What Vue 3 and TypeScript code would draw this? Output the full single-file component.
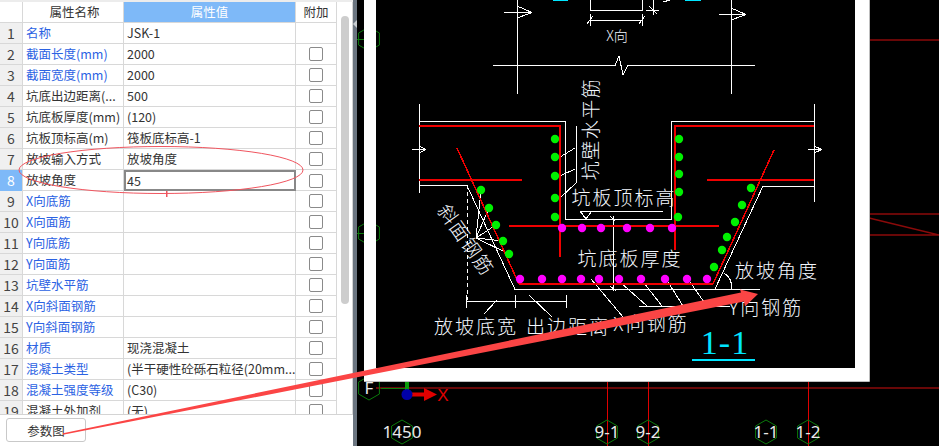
<script setup lang="ts">
interface Row { n: number; name: string; value: string; link: boolean; check: boolean }
const raw: [string, string, boolean][] = [
  ['名称', 'JSK-1', true], ['截面长度(mm)', '2000', true], ['截面宽度(mm)', '2000', true],
  ['坑底出边距离(...', '500', false], ['坑底板厚度(mm)', '(120)', false], ['坑板顶标高(m)', '筏板底标高-1', false],
  ['放坡输入方式', '放坡角度', false], ['放坡角度', '45', false], ['X向底筋', '', true], ['X向面筋', '', true],
  ['Y向底筋', '', true], ['Y向面筋', '', true], ['坑壁水平筋', '', true], ['X向斜面钢筋', '', true],
  ['Y向斜面钢筋', '', true], ['材质', '现浇混凝土', true], ['混凝土类型', '(半干硬性砼砾石粒径(20mm...', true],
  ['混凝土强度等级', '(C30)', true], ['混凝土外加剂', '(无)', false],
]
const rows: Row[] = raw.map((r, i) => ({ n: i + 1, name: r[0], value: r[1], link: r[2], check: i !== 0 }))

const whiteLines = 'M517.500 0V94M731.500 0V94M493 65.500H615M628 65.500H755M615 65.500L619 56L623 75L628 65.500M504 12.500H532L517 6M532 12.500L517 18M719 14.500H746L731 8M746 14.500L731 20' +
  'M590.500 0V10.500H642.500V0M590 20.500H642M590.500 14V26M642.500 14V26M587 24L593 16M639 24L645 16M653.500 0V15M646 10.500H659M649 6L657 14M663 2L670 0' +
  'M419.500 104V193M412 149.500H426L419 146M426 149.500L419 153M419 121.500H565.500V219.500H671.500V121.500H814M814.500 104V202M808 149.500H822L814 146M822 149.500L814 153' +
  'M419 185.500H467L515 289.500H760M715 289L763 186H814M576.500 126V183M560 157L575 148M560 176L575 169M560 198L576 183' +
  'M580 211.500H663M580 211L586 219L592 211M610 216L615 221M613.500 216V291M610 286L616 291' +
  'M466 301.500H566M466.500 295V308M515.500 295V308M566.500 295V308M497 300L484 314M529 295L552 317M591 279L623 317' +
  'M639 306.500H730M620 282L647 306M644 283L662 306M668 282L683 306M690 282L704 302M724 273Q732 278 732 289'
const dash = 'M467.500 185V300'
const hub = { x: 476, y: 238 }
const slopeLeft: [number, number][] = [[481, 190], [489, 208], [496, 225], [503, 241], [509, 254]]
const greens: [number, number][] = [
  [555, 139], [555, 157], [555, 176], [555, 198], [555, 217],
  [679, 139], [679, 157], [679, 174], [679, 192], [678, 217],
  ...slopeLeft,
  [751, 188], [742, 205], [735, 222], [727, 237], [722, 250], [714, 267],
]
const magentas: [number, number][] = [
  [562, 228], [582, 228], [601, 228], [627, 228], [650, 228], [672, 228],
  [520, 279], [542, 279], [562, 279], [581, 279], [599, 279], [619, 279], [641, 279], [665, 279], [687, 279], [707, 279],
]
const hexes: { x: number; y: number; t: string }[] = [
  { x: 369, y: 388, t: 'F' }, { x: 402, y: 432, t: '1450' }, { x: 607, y: 432, t: '9-1' },
  { x: 648, y: 432, t: '9-2' }, { x: 766, y: 432, t: '1-1' }, { x: 808, y: 432, t: '1-2' },
  { x: 369, y: 39, t: '' }, { x: 369, y: 233, t: '' },
]
function hexPts(cx: number, cy: number): string {
  const pts: string[] = []
  for (let i = 0; i < 6; i++) {
    const a = (Math.PI / 3) * i + Math.PI / 6
    pts.push(`${(cx + 12 * Math.cos(a)).toFixed(1)},${(cy + 12 * Math.sin(a)).toFixed(1)}`)
  }
  return pts.join(' ')
}
const labels: { x: number; y: number; t: string }[] = [
  { x: 624, y: 198, t: '坑板顶标高' }, { x: 630, y: 259, t: '坑底板厚度' }, { x: 777, y: 271, t: '放坡角度' },
  { x: 766, y: 308, t: 'Y向钢筋' }, { x: 651, y: 324, t: 'X向钢筋' }, { x: 568, y: 327, t: '出边距离' }, { x: 476, y: 327, t: '放坡底宽' },
]
</script>

<template>
  <div class="page">
    <aside class="panel">
      <div class="strip"></div>
      <div class="grid-wrap">
        <div class="grid">
          <div class="row head">
            <div class="c num"></div>
            <div class="c name">属性名称</div>
            <div class="c val">属性值</div>
            <div class="c add">附加</div>
          </div>
          <div v-for="r in rows" :key="r.n" class="row" :class="{ sel: r.n === 8 }">
            <div class="c num">{{ r.n }}</div>
            <div class="c name" :class="{ link: r.link }">{{ r.name }}</div>
            <div class="c val">{{ r.value }}</div>
            <div class="c add"><span v-if="r.check" class="box"></span></div>
          </div>
        </div>
        <div class="scroll"><div class="thumb"></div></div>
      </div>
      <div class="foot"><button class="btn">参数图</button></div>
    </aside>
    <div class="splitter"><span class="tri"></span></div>
    <main class="canvas">
      <svg class="cad" viewBox="357 0 582 446" width="582" height="446">
        <rect x="357" y="0" width="582" height="446" fill="#000" />
        <g stroke="#8a0a0a" stroke-width="1.500" fill="none">
          <path d="M869 40H939M869 214H939M869 235H939M869 218L939 235M376 388H939" />
        </g>
        <path d="M607.500 382V446M648.500 382V446M808.500 382V446" stroke="#e00000" stroke-width="1" fill="none" />
        <polygon v-for="h in hexes" :key="h.x + '-' + h.y" :points="hexPts(h.x, h.y)" fill="none" stroke="#0b7a0b" stroke-width="1" />
        <path d="M381 388.500H405M357 39.500H364M357 233.500H364" stroke="#0b7a0b" stroke-width="1" />
        <text v-for="h in hexes" :key="'t' + h.x + h.y" :x="h.x" :y="h.y + 6" class="hex-t" text-anchor="middle">{{ h.t }}</text>
        <path d="M364 0H869V381.500H364Z M376 0V368H855V0Z" fill="#fff" fill-rule="evenodd" />
        <path d="M364 381.500H869.500V0" fill="none" stroke="#bdbdbd" stroke-width="1" />
        <rect x="405" y="382" width="4" height="9" fill="#0a9a0a" />
        <rect x="412" y="392.500" width="13" height="4" fill="#e00000" />
        <polygon points="424,388 437,394.500 424,401" fill="#e00000" />
        <circle cx="407" cy="394.500" r="5.500" fill="#0000a8" />
        <text x="443" y="401" class="axis" text-anchor="middle">X</text>

        <rect x="553" y="0" width="15" height="1" fill="#00e5ff" />
        <rect x="685" y="0" width="16" height="1" fill="#00e5ff" />
        <path :d="whiteLines" stroke="#fff" stroke-width="1" fill="none" shape-rendering="crispEdges" />
        <path :d="dash" stroke="#fff" stroke-width="1" stroke-dasharray="4 3" fill="none" shape-rendering="crispEdges" />
        <g stroke="#fff" stroke-width="1" shape-rendering="crispEdges">
          <line v-for="(p, i) in slopeLeft" :key="'l' + i" :x1="hub.x" :y1="hub.y" :x2="p[0]" :y2="p[1]" />
        </g>
        <g stroke="#f00000" fill="none" shape-rendering="crispEdges">
          <path stroke-width="2" d="M419 126H560V257M675 250V126H814M419 180H522M707 180H814M509 226H719M519 284H713" />
          <path stroke-width="1.500" d="M457 148L519 284M713 284L774 150" />
        </g>
        <circle v-for="(p, i) in greens" :key="'g' + i" :cx="p[0]" :cy="p[1]" r="4.200" fill="#00f000" />
        <circle v-for="(p, i) in magentas" :key="'m' + i" :cx="p[0]" :cy="p[1]" r="4.200" fill="#ff00ff" />

        <text v-for="l in labels" :key="l.t" :x="l.x" :y="l.y + 7" class="lbl" text-anchor="middle">{{ l.t }}</text>
        <text x="591" y="129" class="lbl wide" text-anchor="middle" transform="rotate(-90 591 129) translate(0 7)">坑壁水平筋</text>
        <text x="466" y="240" class="lbl wide" text-anchor="middle" transform="rotate(55 466 240) translate(0 7)">斜面钢筋</text>
        <text x="617" y="41" class="lbl small" text-anchor="middle">X向</text>
        <text x="725" y="354" class="title" text-anchor="middle">1-1</text>
        <rect x="692" y="359" width="63" height="2" fill="#00e5ff" />
      </svg>
    </main>
    <svg class="marks" viewBox="0 0 939 446" width="939" height="446">
      <ellipse cx="161" cy="170" rx="142" ry="23.500" fill="none" stroke="#f0555f" stroke-width="1" />
      <rect x="166" y="191" width="1.500" height="6" fill="#f0555f" />
      <polygon points="63,433.200 741,292.500 740,289.500 758,294 745,306.500 744,301.500 63,434.800" fill="#fb4545" />
    </svg>
  </div>
</template>

<style scoped>
.page {
  position: relative;
  display: flex;
  width: 939px;
  height: 446px;
  overflow: hidden;
  background: #000;
  font-family: "Noto Sans CJK SC", "Noto Sans", sans-serif;
  font-size: 12.500px;
  color: #333;
}
.panel {
  width: 353px;
  flex: none;
  display: flex;
  flex-direction: column;
  background: #fff;
}
.strip {
  height: 2px;
  background: #ececec;
}
.grid-wrap {
  height: 413px;
  display: flex;
  overflow: hidden;
  border-bottom: 1px solid #d4d4d4;
  border-right: 1px solid #d4d4d4;
  box-sizing: border-box;
}
.grid {
  width: 337px;
  flex: none;
}
.row {
  display: grid;
  grid-template-columns: 23px 101px 172px 41px;
  height: 21px;
  box-sizing: border-box;
  border-bottom: 1px solid #d8d8d8;
}
.c {
  border-right: 1px solid #d8d8d8;
  line-height: 20px;
  white-space: nowrap;
  overflow: hidden;
  box-sizing: border-box;
}
.num {
  background: #f0f0f0;
  text-align: center;
  font-size: 14px;
  color: #444;
}
.head .num {
  background: #fff;
}
.name {
  padding-left: 3px;
}
.head .name {
  text-align: center;
}
.link {
  color: #2b62e3;
}
.val {
  padding-left: 3px;
}
.head .val {
  background: #7eb9f8;
  color: #fff;
  text-align: center;
  padding: 0;
}
.add {
  display: flex;
  align-items: center;
  justify-content: center;
}
.box {
  width: 12px;
  height: 12px;
  border: 1px solid #8a8a8a;
  border-radius: 2px;
  background: #fff;
}
.sel .num {
  background: #7eb9f8;
  color: #fff;
}
.sel .val {
  border: 2px solid #888;
  line-height: 17px;
  padding-left: 1px;
  height: 21px;
}
.scroll {
  flex: 1;
  position: relative;
}
.thumb {
  position: absolute;
  left: 4px;
  top: 14px;
  width: 8px;
  height: 288px;
  border-radius: 4px;
  background: #cdcdcd;
}
.foot {
  flex: 1;
  padding: 3px 6px;
}
.btn {
  width: 80px;
  height: 24px;
  border: 1px solid #c9c9c9;
  border-radius: 3px;
  background: #fff;
  font: inherit;
  color: #333;
  padding: 0;
}
.splitter {
  width: 4px;
  flex: none;
  background: #6b7580;
  position: relative;
}
.tri {
  position: absolute;
  left: 0;
  top: 20px;
  border-style: solid;
  border-width: 4px 4px 4px 0;
  border-color: transparent #c8ccd0 transparent transparent;
}
.canvas {
  flex: 1;
  position: relative;
}
.cad {
  position: absolute;
  left: 0;
  top: 0;
  display: block;
}
.marks {
  position: absolute;
  left: 0;
  top: 0;
  pointer-events: none;
}
.lbl {
  fill: #f4f8ff;
  font-family: "Noto Sans CJK SC", sans-serif;
  font-size: 19px;
  letter-spacing: 2px;
  font-weight: 300;
}
.wide {
  letter-spacing: 1.500px;
}
.small {
  font-size: 14px;
  letter-spacing: 0;
}
.hex-t {
  fill: #eaeaea;
  font-family: "Noto Sans", sans-serif;
  font-size: 17px;
}
.axis {
  fill: #e00000;
  font-family: "Liberation Sans", sans-serif;
  font-size: 17px;
}
.title {
  fill: #00e5ff;
  font-family: "Liberation Serif", serif;
  font-size: 34px;
  letter-spacing: 1px;
}
</style>
